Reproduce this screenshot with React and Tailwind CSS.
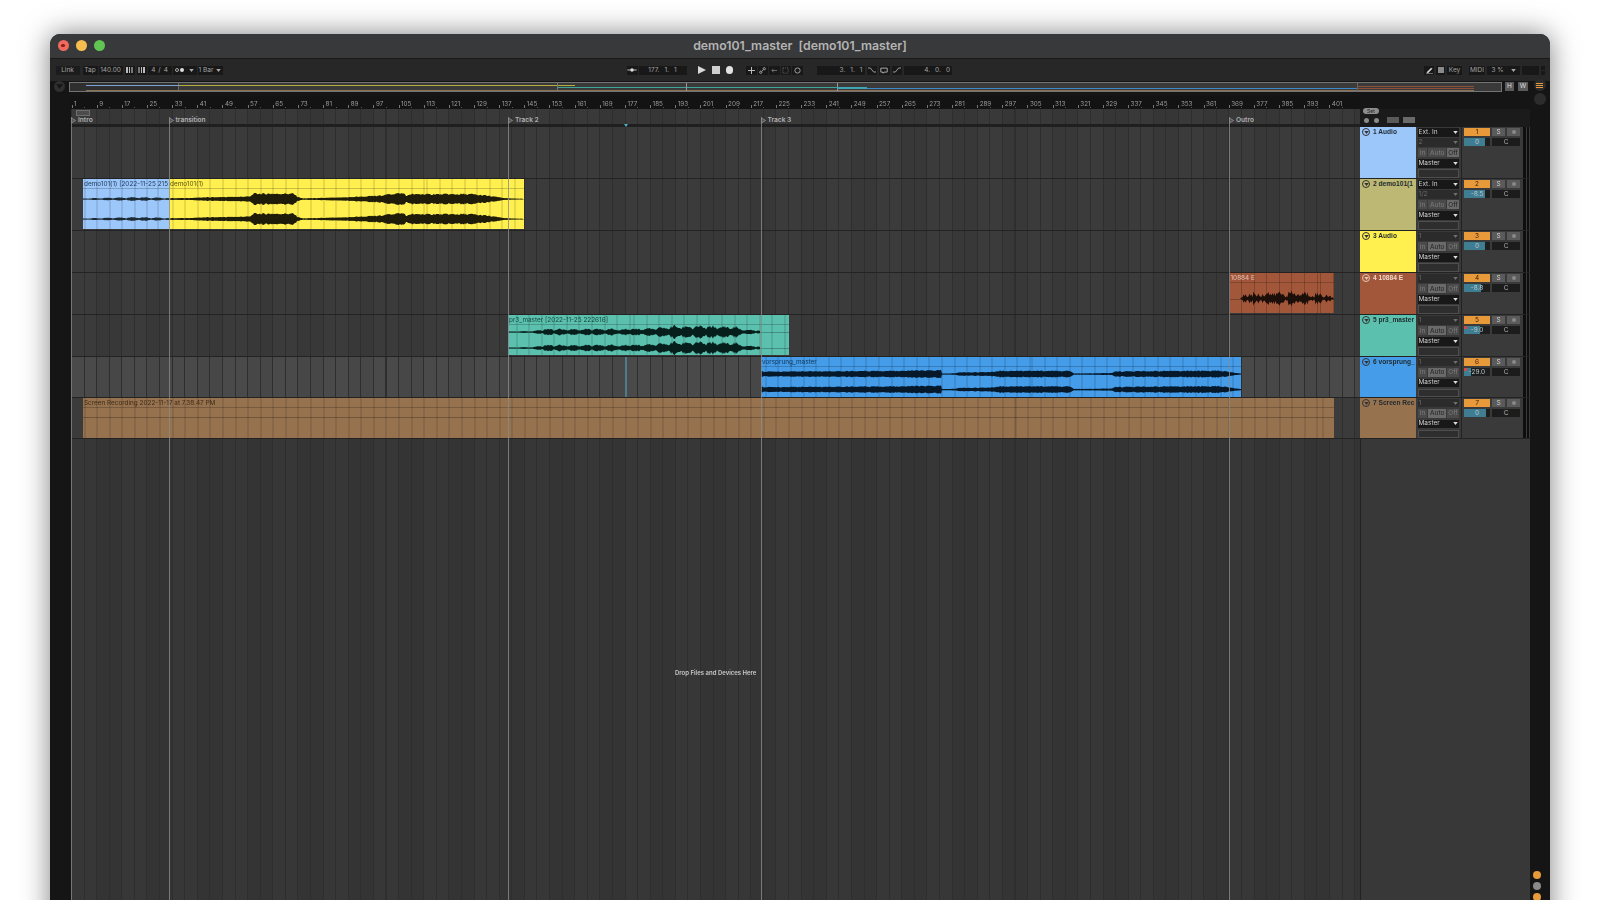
import React from "react";

const LANE_X = 71;

const rulerBars = [];
for (let b = 1; b <= 401; b += 8) rulerBars.push(b);

const locators = [
  { name: "Intro", x: 71 },
  { name: "transition", x: 168.5 },
  { name: "Track 2", x: 508 },
  { name: "Track 3", x: 760.5 },
  { name: "Outro", x: 1229 },
];

const laneGrid =
  "bg-[repeating-linear-gradient(90deg,#2e2e2e_0,#2e2e2e_1px,transparent_1px,transparent_12.58px),repeating-linear-gradient(90deg,rgba(255,255,255,0.014)_0,rgba(255,255,255,0.014)_25.16px,transparent_25.16px,transparent_50.32px)]";

const clipGrid =
  "bg-[repeating-linear-gradient(90deg,rgba(0,0,0,0.2)_0,rgba(0,0,0,0.2)_1px,transparent_1px,transparent_12.58px)]";

// noise that stays the same on every render
const noise = (i) => {
  const n = Math.sin(i * 12.9898) * 43758.5453;
  return n - Math.floor(n);
};

const envelope = (pts, x) => {
  for (let i = 0; i < pts.length - 1; i++) {
    const [x0, a0] = pts[i];
    const [x1, a1] = pts[i + 1];
    if (x >= x0 && x <= x1) return a0 + ((a1 - a0) * (x - x0)) / (x1 - x0 || 1);
  }
  return 0;
};

function wavePath(pts, cy, offset, rough, pulse) {
  const start = pts[0][0];
  const end = pts[pts.length - 1][0];
  const top = [];
  const bottom = [];
  for (let x = start; x <= end; x += 1) {
    const beat = 1 - pulse + pulse * Math.abs(Math.sin((x * Math.PI) / 12.6));
    const a = envelope(pts, x) * beat * (1 - rough + rough * 1.6 * noise(x));
    top.push(`${(x - offset).toFixed(1)} ${(cy - a).toFixed(1)}`);
    bottom.unshift(`${(x - offset).toFixed(1)} ${(cy + a).toFixed(1)}`);
  }
  return `M${top.join("L")}L${bottom.join("L")}Z`;
}

const yellowWave = [
  [83, 0.5], [93, 0.9], [133, 1.8], [160, 1.4], [170, 0.8], [193, 1.1], [197, 1.5], [250, 2.6], [253, 5.5], [293, 5.6], [298, 2], [303, 0.7],
  [340, 1.5], [377, 3.2], [393, 5.5], [404, 6], [407, 3], [410, 5], [470, 5], [486, 3.6], [507, 0.7], [523, 0.3],
];
const tealWave = [
  [508, 0.5], [535, 1.1], [540, 3], [630, 3.2], [655, 4], [675, 6.2], [735, 5.6], [742, 2.6], [760, 1.8],
];
const blueWave = [
  [761, 2.6], [845, 3], [940, 3.8], [941, 3.8], [942, 0.5], [955, 0.7], [958, 1.8], [990, 2], [1000, 3.4], [1070, 3.2],
  [1074, 0.6], [1112, 0.9], [1116, 2.8], [1220, 3.5], [1232, 1.8], [1241, 0.5],
];
const rustWave = [
  [1240, 0.6], [1244, 4.5], [1270, 6], [1300, 5.5], [1325, 4.5], [1333, 0.8],
];

const clips = [
  { row: 1, label: "demo101(1) [2022-11-25 215", x: 83, w: 86, color: "bg-[#9cc7fb]", text: "text-[#1d3a5c]", ink: "#1b2a33", waves: [[199, yellowWave, 0.25, 0.55], [219, yellowWave, 0.25, 0.55]], lines: [199, 219], top: 179, h: 50 },
  { row: 1, label: "demo101(1)", x: 169, w: 355, color: "bg-[#fff04f]", text: "text-[#5c5610]", ink: "#1f1c0a", waves: [[199, yellowWave, 0.22, 0.06], [219, yellowWave, 0.22, 0.06]], lines: [199, 219], top: 179, h: 50 },
  { row: 3, label: "10884 E", x: 1229.5, w: 104.5, color: "bg-[#a3573a]", text: "text-[#e2c1b2]", ink: "#1c0f09", waves: [[298.5, rustWave, 0.75, 0.4]], lines: [298.5], top: 273, h: 40 },
  { row: 4, label: "pr3_master [2022-11-25 222616]", x: 508, w: 281, color: "bg-[#5bc0ad]", text: "text-[#174a40]", ink: "#061f1c", waves: [[332, tealWave, 0.32, 0.5], [348, tealWave, 0.32, 0.5]], lines: [332, 348], top: 315, h: 40 },
  { row: 5, label: "vorsprung_master", x: 761, w: 480, color: "bg-[#459ce9]", text: "text-[#0f3558]", ink: "#06192b", waves: [[374, blueWave, 0.2, 0.1], [389.5, blueWave, 0.2, 0.1]], lines: [374, 389.5], top: 357, h: 40 },
  { row: 6, label: "Screen Recording 2022-11-17 at 7.38.47 PM", x: 83, w: 1251, color: "bg-[#96724f]", text: "text-[#3f2c17]", ink: "#000", waves: [], lines: [417], top: 398, h: 40 },
];

const tracks = [
  { num: 1, name: "1 Audio", color: "bg-[#9cc7fb]", h: "h-[52px]", input: "Ext. In", sub: "2", auto: "off", vol: "0", fill: "w-[82%]", tall: true },
  { num: 2, name: "2 demo101(1", color: "bg-[#bdb974]", h: "h-[52px]", input: "Ext. In", sub: "1/2", auto: "off", vol: "-8.5", fill: "w-[82%]", tall: true },
  { num: 3, name: "3 Audio", color: "bg-[#fff04f]", h: "h-[42px]", input: "1", auto: "auto", vol: "0", fill: "w-[82%]" },
  { num: 4, name: "4 10884 E", color: "bg-[#a3573a]", h: "h-[42px]", input: "1", auto: "auto", vol: "-8.8", fill: "w-[64%]", light: true },
  { num: 5, name: "5 pr3_master", color: "bg-[#5bc0ad]", h: "h-[42px]", input: "1", auto: "auto", vol: "-9.0", fill: "w-[60%]", clip: true },
  { num: 6, name: "6 vorsprung_", color: "bg-[#459ce9]", h: "h-[41px]", input: "1", auto: "auto", vol: "-29.0", fill: "w-[26%]", clip: true, selected: true },
  { num: 7, name: "7 Screen Rec", color: "bg-[#96724f]", h: "h-[41px]", input: "1", auto: "auto", vol: "0", fill: "w-[84%]" },
];

const small = "text-[6.5px] leading-none font-['Inter',sans-serif]";

function Box({ className = "", bg = "bg-[#181818]", ink = "text-[#a2a2a2]", between = false, children }) {
  return (
    <div className={`flex items-center h-[9px] ${between ? "justify-between px-[1px]" : "justify-center"} ${bg} ${ink} ${small} ${className}`}>
      {children}
    </div>
  );
}

function Caret({ className = "" }) {
  return (
    <svg viewBox="0 0 6 4" className={`w-[5px] h-[3px] ${className}`}>
      <path d="M0 0h6L3 4z" fill="currentColor" />
    </svg>
  );
}

function Clip({ clip }) {
  const left = clip.x - LANE_X;
  const rowTop = clip.top;
  return (
    <div
      className={`absolute top-0 overflow-hidden ${clip.color}`}
      style={{ left, width: clip.w, height: clip.h }}
    >
      <div
        className={`absolute inset-0 ${clipGrid}`}
        style={{ backgroundPositionX: -left + 0.5 }}
      />
      <div className="absolute left-0 right-0 top-[9px] h-px bg-black/20" />
      {clip.lines.map((y) => (
        <div key={y} className="absolute left-0 right-0 h-px bg-black/25" style={{ top: y - rowTop }} />
      ))}
      <svg className="absolute inset-0 w-full h-full">
        {clip.waves.map(([cy, pts, rough, pulse]) => (
          <path key={cy} d={wavePath(pts, cy - rowTop, clip.x, rough, pulse)} fill={clip.ink} />
        ))}
      </svg>
      <div className={`absolute left-[1px] top-[1.5px] whitespace-nowrap text-[6.4px] leading-[7px] font-['Inter',sans-serif] ${clip.text}`}>
        {clip.label}
      </div>
    </div>
  );
}

function TrackRow({ track, index }) {
  const rowClips = clips.filter((c) => c.row === index);
  const lit = { bg: "bg-[#6a6a6a]", ink: "text-[#1f1f1f]" };
  const dim = { bg: "bg-[#4a4a4a]", ink: "text-[#7d7d7d]" };
  return (
    <div className={`flex ${track.h} border-b border-[#232323]`}>
      <div className={`relative w-[1289px] shrink-0 ${track.selected ? "bg-[#474747]" : "bg-[#383838]"} ${laneGrid}`}>
        {rowClips.map((c) => (
          <Clip key={c.label} clip={c} />
        ))}
        {track.selected && <div className="absolute left-[554px] top-0 bottom-0 w-[1.5px] bg-[#4f7c88]" />}
      </div>
      <div className={`relative w-[56px] shrink-0 ${track.color}`}>
        <div className="flex items-center gap-[3px] pl-[1px] pt-[1px]">
          <div className={`flex items-center justify-center w-[8px] h-[8px] ml-[1px] rounded-full border ${track.light ? "border-[#e6c6b6] text-[#e6c6b6]" : "border-[#333] text-[#333]"}`}>
            <Caret className="w-[4px] h-[2.5px]" />
          </div>
          <span className={`whitespace-nowrap text-[6.6px] leading-none font-bold font-['Liberation_Sans',sans-serif] ${track.light ? "text-[#f0d8cc]" : "text-[#1f2a2e]"}`}>
            {track.name}
          </span>
        </div>
      </div>
      <div className="flex flex-col w-[46px] shrink-0 gap-[1.6px] pl-[1.5px] pr-[2px] pt-[1px] bg-[#393939] border-r border-[#222]">
        {track.tall && (
          <Box between ink="text-[#c8c8c8]">
            <span>{track.input}</span>
            <Caret className="text-[#ddd]" />
          </Box>
        )}
        <Box between bg="bg-[#2b2b2b]" ink="text-[#6e6e6e]">
          <span>{track.tall ? track.sub : track.input}</span>
          <Caret />
        </Box>
        <div className="flex gap-[1px]">
          <Box className="w-[10px]" {...dim}>In</Box>
          <Box className="w-[18px]" {...(track.auto === "auto" ? lit : dim)}>Auto</Box>
          <Box className="w-[12px]" {...(track.auto === "off" ? lit : dim)}>Off</Box>
        </div>
        <Box between ink="text-[#d0d0d0]">
          <span>Master</span>
          <Caret className="text-[#ddd]" />
        </Box>
        <Box bg="bg-[#2e2e2e]" className="border border-[#4e4e4e]" />
      </div>
      <div className="flex w-[68px] shrink-0 bg-[#3a3a3a] pl-[2px] pt-[1px]">
        <div className="flex flex-col gap-[2px] w-[56px]">
          <div className="flex gap-[2px]">
            <div className={`flex items-center justify-center w-[26px] h-[8px] bg-[#e8993a] text-[#3a2408] ${small}`}>{track.num}</div>
            <div className={`flex items-center justify-center w-[13px] h-[8px] bg-[#5a5a5a] text-[#cfcfcf] ${small}`}>S</div>
            <div className="flex items-center justify-center w-[13px] h-[8px] bg-[#5a5a5a]">
              <div className="w-[4px] h-[4px] rounded-full bg-[#888]" />
            </div>
          </div>
          <div className="flex gap-[2px]">
            <div className={`relative flex items-center justify-center w-[26px] h-[8px] bg-[#1e1e1e] text-[#b8c8cc] ${small}`}>
              <div className={`absolute left-0 top-0 bottom-0 ${track.fill} bg-[#3f7e92]`} />
              {track.clip && <div className="absolute left-0 top-0 w-[3px] h-[2.5px] bg-[#d04a4a]" />}
              <span className="relative">{track.vol}</span>
            </div>
            <div className={`flex items-center justify-center w-[28px] h-[8px] bg-[#1c1c1c] text-[#b5b5b5] ${small}`}>C</div>
          </div>
        </div>
        <div className="flex gap-[1px] ml-[3px] -mt-[1px] w-[6px]">
          <div className="w-[2.5px] h-full bg-[#0e0e0e]" />
          <div className="w-[2.5px] h-full bg-[#0e0e0e]" />
        </div>
      </div>
    </div>
  );
}

function Toolbar() {
  const stroke = { fill: "none", stroke: "#b0b0b0", strokeWidth: 1 };
  return (
    <div className="flex items-center h-[23px] bg-[#272727] border-t border-[#1a1a1a] pl-[5.5px] pr-[5px]">
      <Box className="w-[24px]" bg="bg-[#1c1c1c]">Link</Box>
      <Box className="w-[15px] ml-[3px]">Tap</Box>
      <Box className="w-[24px] ml-[1px]">140.00</Box>
      <div className="flex items-center justify-center w-[10px] h-[9px] ml-[2px] bg-[#181818] gap-[1px]">
        <i className="block w-[1.5px] h-[6px] bg-[#bbb]" />
        <i className="block w-[1.5px] h-[6px] bg-[#bbb]" />
        <i className="block w-[1.5px] h-[6px] bg-[#777]" />
      </div>
      <div className="flex items-center justify-center w-[10px] h-[9px] ml-[2px] bg-[#181818] gap-[1px]">
        <i className="block w-[1.5px] h-[6px] bg-[#777]" />
        <i className="block w-[1.5px] h-[6px] bg-[#bbb]" />
        <i className="block w-[1.5px] h-[6px] bg-[#bbb]" />
      </div>
      <Box className="w-[24px] ml-[1px] gap-[3px]"><span>4</span><span>/</span><span>4</span></Box>
      <Box className="w-[24px] ml-[1px] gap-[1px]">
        <i className="block w-[4px] h-[4px] rounded-full border border-[#aaa]" />
        <i className="block w-[4px] h-[4px] rounded-full bg-[#ddd] mr-[4px]" />
        <Caret className="text-[#aaa]" />
      </Box>
      <Box className="w-[25px] ml-[1px] gap-[3px]"><span>1 Bar</span><Caret className="text-[#aaa]" /></Box>

      <Box className="w-[11px] ml-[404px]">
        <svg viewBox="0 0 11 7" className="w-[10px] h-[6px]"><path d="M0 3h11v1H0z" fill="#bbb" /><circle cx="5.5" cy="3.5" r="2" fill="#ddd" /></svg>
      </Box>
      <Box className="w-[48px] ml-[1px] gap-[5px]"><span>177.</span><span>1.</span><span>1</span></Box>
      <svg viewBox="0 0 8 8" className="w-[8px] h-[8px] ml-[11px]"><path d="M0 0l8 4-8 4z" fill="#d8d8d8" /></svg>
      <div className="w-[8px] h-[8px] ml-[6px] bg-[#cfcfcf]" />
      <div className="w-[7.5px] h-[7.5px] ml-[6px] rounded-full bg-[#e2e2e2]" />
      <div className="flex items-center ml-[13px] gap-[1px]">
        <Box className="w-[10.5px]"><svg viewBox="0 0 8 8" className="w-[7px] h-[7px]"><path d="M4 0v8M0 4h8" {...stroke} stroke="#d0d0d0" /></svg></Box>
        <Box className="w-[10.5px]"><svg viewBox="0 0 8 8" className="w-[7px] h-[7px]"><circle cx="6" cy="2" r="1.3" {...stroke} /><circle cx="2" cy="6" r="1.3" {...stroke} /><path d="M5 3L3 5" {...stroke} /></svg></Box>
        <Box className="w-[10.5px]"><svg viewBox="0 0 8 8" className="w-[7px] h-[7px]"><path d="M1 4h6M3 2L1 4l2 2" {...stroke} stroke="#777" /></svg></Box>
        <Box className="w-[10.5px]"><svg viewBox="0 0 8 8" className="w-[7px] h-[7px]"><rect x="1" y="1" width="6" height="6" {...stroke} stroke="#666" strokeDasharray="1.3 1" /></svg></Box>
        <Box className="w-[10.5px]"><svg viewBox="0 0 8 8" className="w-[7px] h-[7px]"><circle cx="4" cy="4" r="3" {...stroke} /></svg></Box>
      </div>
      <Box className="w-[48px] ml-[14px] gap-[5px] justify-end pr-[2px]"><span>3.</span><span>1.</span><span>1</span></Box>
      <Box className="w-[10.5px] ml-[2px]">
        <svg viewBox="0 0 10 7" className="w-[8px] h-[6px]"><path d="M0 1h3l4 5h3" fill="none" stroke="#bbb" /></svg>
      </Box>
      <Box className="w-[10.5px] ml-[2px]">
        <svg viewBox="0 0 10 8" className="w-[8px] h-[7px]"><path d="M1 1h8v5H5l-1 1.5L3.5 6H1z" fill="none" stroke="#ccc" /></svg>
      </Box>
      <Box className="w-[10.5px] ml-[2px]">
        <svg viewBox="0 0 10 7" className="w-[8px] h-[6px]"><path d="M0 6h3l4-5h3" fill="none" stroke="#bbb" /></svg>
      </Box>
      <Box className="w-[48px] ml-[2px] gap-[5px] justify-end pr-[2px]"><span>4.</span><span>0.</span><span>0</span></Box>

      <Box className="w-[10px] ml-[472px]">
        <svg viewBox="0 0 8 8" className="w-[7px] h-[7px]"><path d="M1 6l5-5 1 1-5 5z M0 7.4h8" fill="#ddd" stroke="#ddd" strokeWidth="0.5" /></svg>
      </Box>
      <div className="flex items-center justify-center w-[9px] h-[9px] ml-[2px] bg-[#181818]">
        <div className="w-[6px] h-[6px] bg-[#8a8a8a]" />
      </div>
      <Box className="w-[15px] ml-[2px]">Key</Box>
      <Box className="w-[16px] ml-[7px]">MIDI</Box>
      <Box className="w-[33px] ml-[2px] gap-[7px]"><span>3 %</span><Caret className="text-[#aaa]" /></Box>
      <Box className="w-[17px] ml-[2px]" />
      <div className="flex flex-col gap-[1px] w-[4px] ml-[2px]">
        <div className="h-[4px] bg-[#181818]" />
        <div className="h-[4px] bg-[#181818]" />
      </div>
    </div>
  );
}

function Overview() {
  const segs = [
    "left-[16px] w-[93px] top-[2px] bg-[#7da3d6]",
    "left-[109px] w-[396px] top-[2px] bg-[#b5ad3c]",
    "left-[487px] w-[280px] top-[4px] bg-[#3fa596]",
    "left-[767px] w-[534px] top-[5px] bg-[#3f89c9]",
    "left-[1287px] w-[117px] top-[3.5px] bg-[#8c4f38]",
    "left-[16px] w-[1388px] top-[7px] bg-[#8c7253]",
  ];
  return (
    <div className="flex items-center h-[15px] pb-[4px] bg-[#151515]">
      <div className="flex items-center justify-center w-[19px] shrink-0">
        <div className="flex items-center justify-center w-[11px] h-[11px] rounded-full bg-[#2f2f2f] text-[#151515]">
          <Caret className="w-[7px] h-[5px]" />
        </div>
      </div>
      <div className="relative w-[1433px] h-[10px] shrink-0 bg-[#3a3a3a] border border-[#737373]">
        <div className="absolute left-0 top-0 bottom-0 w-[109px] bg-[#2f2f2f] border-r border-[#6b6b6b]" />
        {segs.map((cls) => (
          <div key={cls} className={`absolute h-[1px] ${cls}`} />
        ))}
        <div className="absolute left-[487px] top-0 bottom-0 w-px bg-[#777]" />
        <div className="absolute left-[616px] top-0 bottom-0 w-px bg-[#999]" />
        <div className="absolute left-[767px] top-0 bottom-0 w-px bg-[#999]" />
        <div className="absolute left-[767px] top-[4px] w-[30px] h-[2px] bg-[#3fa5b5]" />
        <div className="absolute left-[1287px] top-0 bottom-0 w-px bg-[#666]" />
        <div className="absolute left-[1287px] w-[117px] top-[5.5px] h-px bg-[#8c4f38]" />
      </div>
      <Box className="w-[9px] ml-[3px]" bg="bg-[#5a5a5a]" ink="text-[#ddd]">H</Box>
      <Box className="w-[10px] ml-[4px]" bg="bg-[#5a5a5a]" ink="text-[#ddd]">W</Box>
    </div>
  );
}

export default function App() {
  return (
    <div className="h-screen w-full overflow-hidden bg-white pt-[34px] px-[50px] font-['Inter',sans-serif]">
      <div className="h-[900px] w-[1500px] rounded-t-[10px] bg-[#151515] overflow-hidden shadow-[0_0_28px_rgba(0,0,0,0.5)] blur-[0.45px]">
        {/* Title bar */}
        <div className="relative flex items-center justify-center h-[24px] bg-[#38393b]">
          <div className="absolute left-[7.5px] top-[6px] flex gap-[7px]">
            <div className="flex items-center justify-center w-[11px] h-[11px] rounded-full bg-[#ee6a5f]">
              <div className="w-[3.5px] h-[3.5px] rounded-full bg-[#8e1d14]" />
            </div>
            <div className="w-[11px] h-[11px] rounded-full bg-[#f5be4f]" />
            <div className="w-[11px] h-[11px] rounded-full bg-[#61c554]" />
          </div>
          <span className="whitespace-pre text-[12.3px] font-semibold text-[#b4b4b4]">demo101_master  [demo101_master]</span>
        </div>

        <Toolbar />
        <Overview />

        <div className="flex h-full">
          {/* Left strip */}
          <div className="w-[21px] shrink-0 bg-[#151515]" />

          <div className="relative w-[1459px] shrink-0">
            {/* Ruler */}
            <div className="flex h-[13px] w-[1289px] bg-[#131313] pt-[5px]">
              {rulerBars.map((b) => (
                <div key={b} className="relative w-[25.16px] shrink-0 text-[6.3px] leading-[7px] text-[#9a9a9a] pl-[3px]">
                  <i className="absolute left-[0.5px] bottom-[1px] w-px h-[3px] bg-[#777]" />
                  <i className="absolute left-[13px] bottom-[1px] w-px h-[1.5px] bg-[#555]" />
                  {b}
                </div>
              ))}
            </div>

            {/* Locators row and Set controls */}
            <div className="flex h-[18px]">
              <div className="relative w-[1289px] shrink-0">
                <div className={`relative h-[15px] bg-[#363636] ${laneGrid}`}>
                  <div className="absolute left-[5px] top-[1px] w-[14px] h-[6px] bg-[#4c4c4c] border border-[#6e6e6e]" />
                  {locators.map((l) => (
                    <div
                      key={l.name}
                      className="absolute top-[8px] flex items-center gap-[2px] text-[6.6px] leading-none font-semibold text-[#b2b2b2]"
                      style={{ left: l.x - LANE_X }}
                    >
                      <svg viewBox="0 0 6 7" className="w-[5px] h-[7px]"><path d="M0.5 0.5l5 3-5 3z" fill="#555" stroke="#8d8d8d" /></svg>
                      <span>{l.name}</span>
                    </div>
                  ))}
                </div>
                <div className="relative h-[3px] bg-[#1f1f1f]">
                  <svg viewBox="0 0 4 3" className="absolute left-[553px] top-0 w-[4px] h-[3px]"><path d="M0 0h4L2 3z" fill="#4fb0c6" /></svg>
                </div>
              </div>
              <div className="w-[170px] bg-[#1b1b1b] pl-[3px]">
                <div className="flex items-center justify-center w-[16px] h-[6px] rounded-full bg-[#8e8e8e] text-[5px] leading-none text-[#222] -mt-[1px]">Set</div>
                <div className="flex items-center mt-[3px] pl-[1px]">
                  <div className="w-[5px] h-[5px] rounded-full bg-[#8a8a8a]" />
                  <div className="w-[5px] h-[5px] rounded-full bg-[#8a8a8a] ml-[5px]" />
                  <div className="w-[12px] h-[6px] ml-[8px] bg-[#5a5a5a]" />
                  <div className="w-[12px] h-[6px] ml-[4px] bg-[#6a6a6a]" />
                </div>
              </div>
            </div>

            {tracks.map((t, i) => (
              <TrackRow key={t.num} track={t} index={i} />
            ))}

            {/* Empty area below the tracks */}
            <div className="flex h-[500px]">
              <div className={`relative w-[1289px] shrink-0 bg-[#343434] ${laneGrid}`}>
                <div className="absolute top-[231px] left-[604px] whitespace-nowrap text-[6px] leading-none font-semibold text-[#c9c9c9]">
                  Drop Files and Devices Here
                </div>
              </div>
              <div className="flex-1 bg-[#383838] border-l border-[#222]" />
            </div>

            {/* Locator lines run over the clips */}
            {locators.map((l) => (
              <div
                key={l.name}
                className="absolute top-[21px] bottom-0 w-px bg-[#8a8a8a]/80"
                style={{ left: l.x - LANE_X }}
              />
            ))}
          </div>

          {/* Right strip */}
          <div className="relative w-[20px] shrink-0 bg-[#151515]">
            <div className="absolute left-[3.5px] top-[-17px] flex flex-col justify-center items-center gap-[1px] w-[12px] h-[12px] rounded-full bg-[#2c2c2c]">
              <i className="block w-[7px] h-[1px] bg-[#e8993a]" />
              <i className="block w-[7px] h-[1px] bg-[#e8993a]" />
              <i className="block w-[7px] h-[1px] bg-[#e8993a]" />
            </div>
            <div className="absolute left-[3.5px] top-[-3px] w-[12px] h-[12px] rounded-full bg-[#2c2c2c]" />
            <div className="absolute left-[3px] top-[775px] w-[8px] h-[8px] rounded-full bg-[#e8993a]" />
            <div className="absolute left-[3px] top-[786px] w-[8px] h-[8px] rounded-full bg-[#8a8a8a]" />
            <div className="absolute left-[3px] top-[797px] w-[8px] h-[8px] rounded-full bg-[#e8993a]" />
          </div>
        </div>
      </div>
    </div>
  );
}
